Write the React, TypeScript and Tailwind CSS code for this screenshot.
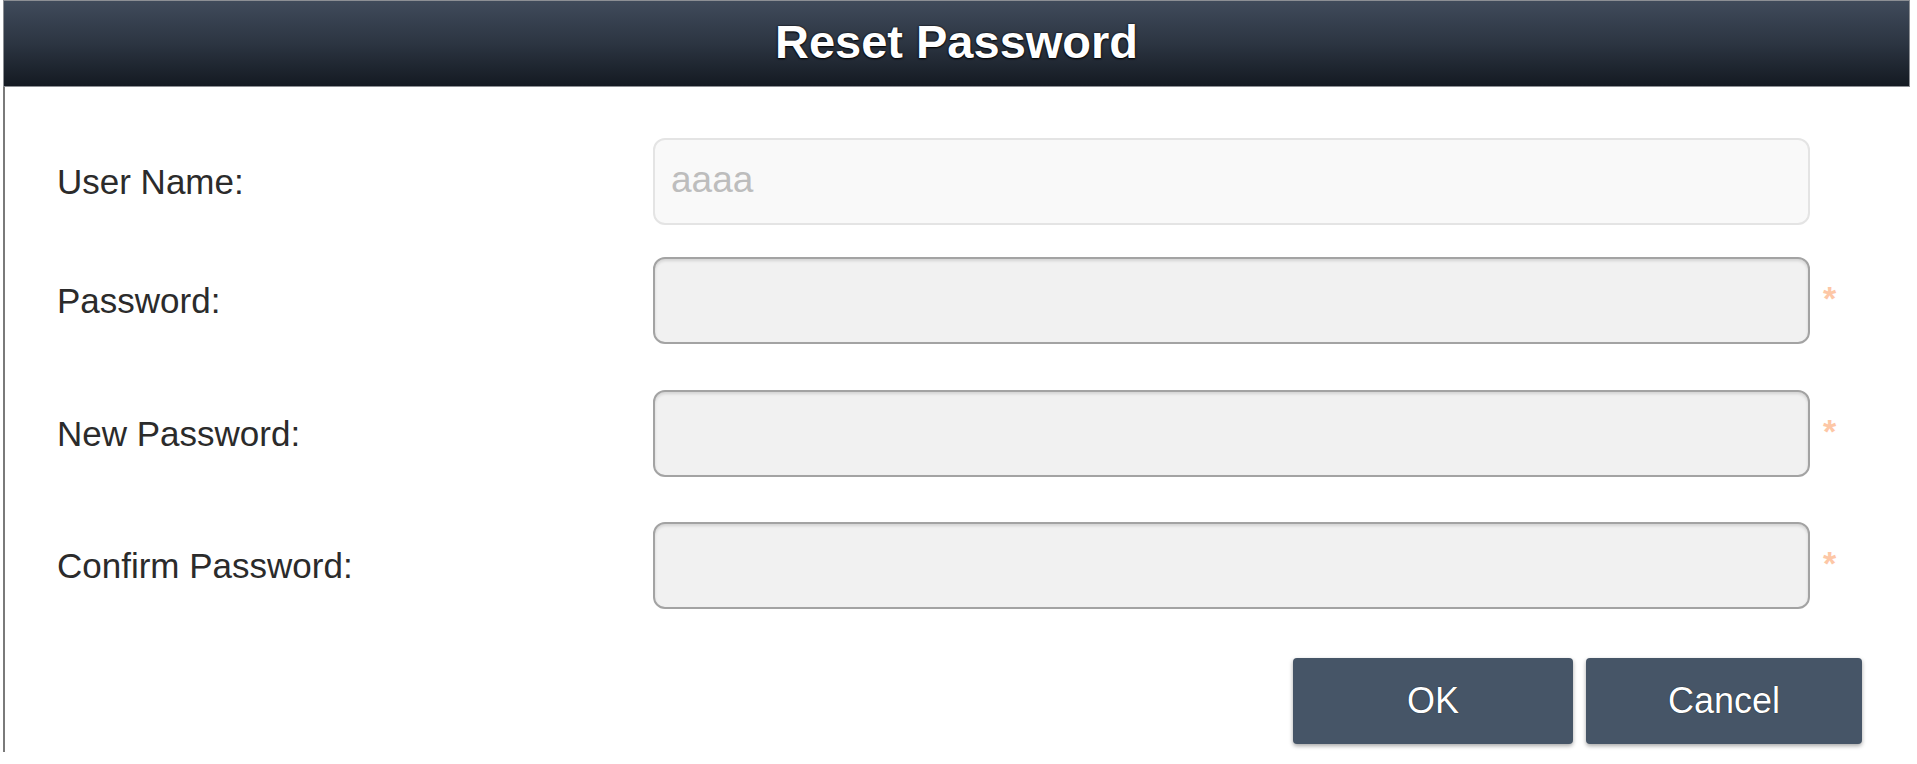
import { useState } from 'react';

const fields = [
  { label: 'Password:', gap: 'mt-[32px]' },
  { label: 'New Password:', gap: 'mt-[46px]' },
  { label: 'Confirm Password:', gap: 'mt-[45px]' },
];

export default function App() {
  const [values, setValues] = useState<Record<string, string>>({});

  return (
    <div className="w-[1917px] h-[764px] bg-white font-['Liberation_Sans',Arial,sans-serif] text-[#2b2b2b]">
      <div className="ml-[3px] w-[1907px]">
        {/* Header */}
        <div className="h-[87px] border border-[#8c8f94] bg-gradient-to-b from-[#404b5b] via-[#2c3542] to-[#141a22] flex items-center justify-center">
          <h1 className="text-white text-[47px] font-bold leading-none [text-shadow:0_0_2px_#000,0_1px_2px_#000] -mt-[4px]">
            Reset Password
          </h1>
        </div>

        {/* Body */}
        <div className="h-[665px] border-l-2 border-[#7a7a7a] pl-[52px] pt-[51px]">
          <div className="flex items-center h-[87px]">
            <label className="w-[596px] text-[35px] leading-none">User Name:</label>
            <div className="w-[1157px] h-[87px] rounded-[12px] border-2 border-[#e4e4e4] bg-[#f9f9f9] flex items-center pl-[16px] text-[37px] text-[#bdbdbd] pb-[4px]">
              aaaa
            </div>
          </div>

          {fields.map((f) => (
            <div key={f.label} className={`flex items-center h-[87px] ${f.gap}`}>
              <label className="w-[596px] text-[35px] leading-none">{f.label}</label>
              <input
                type="password"
                value={values[f.label] || ''}
                onChange={(e) => setValues({ ...values, [f.label]: e.target.value })}
                className="w-[1157px] h-[87px] rounded-[12px] border-2 border-[#a3a3a3] bg-[#f1f1f1] shadow-[inset_0_2px_3px_rgba(0,0,0,0.12)] outline-none px-[16px] text-[35px]"
              />
              <span className="self-start mt-[24px] ml-[13px] text-[34px] font-bold leading-none text-[#fdc7a6]">*</span>
            </div>
          ))}

          {/* Buttons */}
          <div className="flex justify-end gap-[13px] mt-[49px] w-[1805px]">
            <button className="w-[280px] h-[86px] rounded-[4px] bg-[#465567] text-white text-[36px] shadow-[0_2px_4px_rgba(0,0,0,0.35)] [text-shadow:0_0_1px_#000]">
              OK
            </button>
            <button className="w-[276px] h-[86px] rounded-[4px] bg-[#465567] text-white text-[36px] shadow-[0_2px_4px_rgba(0,0,0,0.35)] [text-shadow:0_0_1px_#000]">
              Cancel
            </button>
          </div>
        </div>
      </div>
    </div>
  );
}
